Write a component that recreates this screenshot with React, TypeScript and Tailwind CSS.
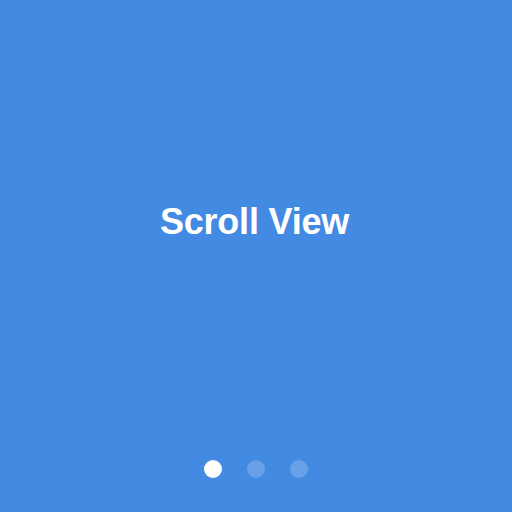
export default function App() {
  return (
    <div className="flex h-[512px] w-[512px] flex-col bg-[#438ae2]" style={{ fontFamily: '"Liberation Sans", Arial, sans-serif' }}>
      <div className="flex flex-1 items-center justify-center pb-[16px] pr-[3px]">
        <h1 className="text-[36px] font-bold tracking-[-0.2px] text-white">Scroll View</h1>
      </div>
      <div className="flex items-center justify-center gap-[25px] pb-[34px]">
        <span className="h-[18px] w-[18px] rounded-full bg-white" />
        <span className="h-[18px] w-[18px] rounded-full bg-white/20" />
        <span className="h-[18px] w-[18px] rounded-full bg-white/20" />
      </div>
    </div>
  )
}
